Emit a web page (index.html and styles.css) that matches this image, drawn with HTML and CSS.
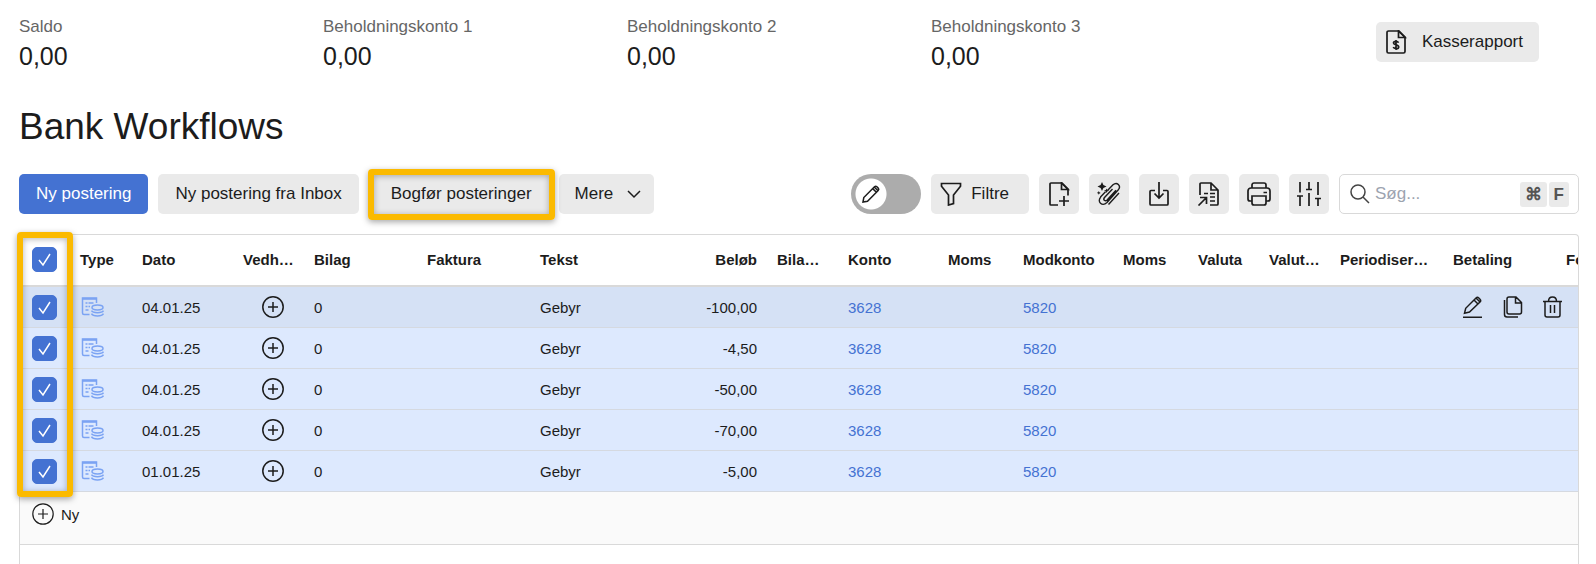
FILE: index.html
```
<!DOCTYPE html>
<html lang="da">
<head>
  <meta charset="UTF-8">
  <meta name="viewport" content="width=device-width, initial-scale=1.0">
  <title>Bank Workflows</title>
  <link rel="stylesheet" href="styles.css">
</head>
<body>
  <svg class="sprite" aria-hidden="true">
    <symbol id="i-plus-circle" viewBox="0 0 24 24">
      <circle cx="12" cy="12" r="10.2"/><path d="M12 7v10M7 12h10"/>
    </symbol>
    <symbol id="i-type" viewBox="0 0 24 24">
      <path d="M9.500 19.500H4A1.500 1.500 0 0 1 2.500 18V3h14v5"/><path d="M2.500 3.800h14" stroke-width="2"/>
      <path d="M5.500 8h2M8.500 8h5M5.500 11.500h2M8.500 11.500h1.500M5.500 15h3"/>
      <ellipse cx="17.500" cy="12.500" rx="5.500" ry="2.400"/>
      <path d="M11.500 15.700c1.500 2.600 10.500 2.600 12 0M11.500 18.700c1.500 3 10.500 3 12 0"/>
    </symbol>
    <symbol id="i-edit" viewBox="0 0 24 24">
      <path d="M3 22.300h19M4.500 18.300l1.200-5L16 3a2 2 0 0 1 2.800 0l1.200 1.200a2 2 0 0 1 0 2.800L9.500 17.100zM14 5l4 4M16 3l4 4"/>
    </symbol>
    <symbol id="i-copy" viewBox="0 0 24 24">
      <path d="M9 2h7l5.500 5.500V17a2 2 0 0 1-2 2H9a2 2 0 0 1-2-2V4a2 2 0 0 1 2-2zM15.500 2v6h6M4.500 5v14.500A2.500 2.500 0 0 0 7 22h11"/>
    </symbol>
    <symbol id="i-trash" viewBox="0 0 24 24">
      <path d="M3 6.500h19M5 6.500v13.500a2 2 0 0 0 2 2h11a2 2 0 0 0 2-2V6.500M8.500 6.500c0-6 8-6 8 0M10.500 10v8M14.500 10v8"/>
    </symbol>
  </svg>

  <header class="stats">
    <div class="stat"><span>Saldo</span><strong>0,00</strong></div>
    <div class="stat"><span>Beholdningskonto 1</span><strong>0,00</strong></div>
    <div class="stat"><span>Beholdningskonto 2</span><strong>0,00</strong></div>
    <div class="stat"><span>Beholdningskonto 3</span><strong>0,00</strong></div>
    <button class="btn report">
      <svg class="icon" viewBox="0 0 24 24">
        <path d="M4.500 1H15l6 6v14.500a1.500 1.500 0 0 1-1.500 1.500h-15A1.500 1.500 0 0 1 3 21.500v-19A1.500 1.500 0 0 1 4.500 1z"/>
        <path d="M14.500 1v6.500H21z"/>
        <path d="M14.500 12.700c-.6-1.700-5-1.900-5 .3 0 2.400 5.200 1.400 5.200 3.900 0 2.300-4.800 2.200-5.400.2M12 10v10"/>
      </svg>
      Kasserapport
    </button>
  </header>

  <h1>Bank Workflows</h1>

  <div class="toolbar">
    <button class="btn primary">Ny postering</button>
    <button class="btn">Ny postering fra Inbox</button>
    <span class="marked"><button class="btn">Bogfør posteringer</button></span>
    <button class="btn more">Mere
      <svg width="16" height="16" viewBox="0 0 16 16"><path d="M2 5l6 6 6-6"/></svg>
    </button>

    <label class="switch">
      <input type="checkbox" aria-label="Redigering">
      <svg width="20" height="20" viewBox="0 0 20 20"><path d="M2 18l.8-4.500L13.500 2.800a1.700 1.700 0 0 1 2.400 0l1.300 1.300a1.700 1.700 0 0 1 0 2.400L6.500 17.200zM11.700 4.600l3.700 3.700M13.300 3l3.700 3.700"/></svg>
    </label>
    <button class="btn filter">
      <svg class="icon" viewBox="0 0 24 24"><path d="M2.500 1.500h19v2.800L14.500 13v8.500l-5 1.500V13l-7-8.700z"/></svg>
      Filtre
    </button>
    <button class="btn square" aria-label="Nyt bilag">
      <svg class="icon" viewBox="0 0 24 24"><path d="M11 23H4a1 1 0 0 1-1-1V2a1 1 0 0 1 1-1h11l6 6v6.500M17 14v10M12 19h10"/><path d="M14.500 1v6.500H21z"/></svg>
    </button>
    <button class="btn square" aria-label="Match bilag">
      <svg class="icon" viewBox="0 0 24 24">
        <path d="M10.500 8.500l5.500-5.700c4-3.500 8.500 1 5.300 4.900L10 20.500c-4.800 4.500-10.500-.8-6.200-5.500M15.500 7l-8 8.500c-1.800 2.300.6 4.400 2.600 2.500L19 8.200M17 11.500l-7 7.500M3.500 15l5-5.300M22 11L11.500 22.500" stroke-width="1.400"/>
        <path d="M5 0l1.400 3.100L9.500 4.500 6.400 5.900 5 9 3.600 5.900.5 4.500l3.100-1.400z" fill="currentColor" stroke="none"/>
        <path d="M9.500 6.500l.7 1.600 1.800.7-1.800.7-.7 1.500-.7-1.500-1.800-.7 1.800-.7zM1.800 9l.6 1.300 1.400.6-1.400.6-.6 1.300-.6-1.300-1.400-.6 1.400-.6z" fill="currentColor" stroke="none"/>
      </svg>
    </button>
    <button class="btn square" aria-label="Importer">
      <svg class="icon" viewBox="0 0 24 24"><path d="M8 8.500H4a1 1 0 0 0-1 1V22a1 1 0 0 0 1 1h16a1 1 0 0 0 1-1V9.500a1 1 0 0 0-1-1h-4M12 0v16M7.500 11.500L12 16l4.500-4.500"/></svg>
    </button>
    <button class="btn square" aria-label="Eksporter">
      <svg class="icon" viewBox="0 0 24 24"><path d="M3 13V2a1 1 0 0 1 1-1h10l7 7v14a1 1 0 0 1-1 1h-7M14 1v7h7M7 11.500h4M13 11.500h5M13 15h5M13 19h5M1.500 23.500l8-8M3 15.500h6.500V22"/></svg>
    </button>
    <button class="btn square" aria-label="Udskriv">
      <svg class="icon" viewBox="0 0 24 24"><path d="M5 19H3a2 2 0 0 1-2-2V9a3 3 0 0 1 3-3h16a3 3 0 0 1 3 3v8a2 2 0 0 1-2 2h-2M5 6V3a2 2 0 0 1 2-2h10a2 2 0 0 1 2 2v3M5 14h14v7a2 2 0 0 1-2 2H7a2 2 0 0 1-2-2zM16.500 10.500H20"/></svg>
    </button>
    <button class="btn square" aria-label="Indstillinger">
      <svg class="icon" viewBox="0 0 24 24"><path d="M3 0v10.500M0 14h6M3 14v10M12 0v7.500M9 7.500h6M12 11v13M21 0v13M18 16.500h6M21 16.500V24"/></svg>
    </button>
    <div class="search">
      <svg width="20" height="20" viewBox="0 0 20 20"><circle cx="8" cy="8" r="7"/><path d="M13 13l6 6"/></svg>
      <input type="text" placeholder="Søg..." aria-label="Søg">
      <kbd>⌘</kbd><kbd>F</kbd>
    </div>
  </div>

  <main class="grid-wrap">
    <div class="grid">
      <table>
        <colgroup>
          <col class="c-check"><col class="c-type"><col class="c-date"><col class="c-short"><col class="c-wide"><col class="c-wide">
          <col class="c-text"><col class="c-amount"><col class="c-short"><col class="c-konto"><col class="c-moms"><col class="c-konto">
          <col class="c-moms"><col class="c-short"><col class="c-short"><col class="c-wide"><col class="c-wide"><col class="c-wide">
        </colgroup>
        <thead>
          <tr>
            <th class="check"><input type="checkbox" aria-label="Vælg alle" checked></th>
            <th>Type</th><th>Dato</th><th title="Vedhæftning">Vedh…</th><th>Bilag</th><th>Faktura</th><th>Tekst</th>
            <th class="num">Beløb</th><th title="Bilagsnr.">Bila…</th><th>Konto</th><th>Moms</th><th>Modkonto</th><th>Moms</th>
            <th>Valuta</th><th title="Valutakurs">Valut…</th><th title="Periodisering">Periodiser…</th><th>Betaling</th><th>Forfald</th>
          </tr>
        </thead>
        <tbody id="rows"></tbody>
      </table>
      <div class="new-row">
        <button><svg class="icon" viewBox="0 0 24 24"><use href="#i-plus-circle"/></svg>Ny</button>
      </div>
    </div>
    <div class="check-mark-area"></div>
  </main>

  <script>
    const entries = [
      { date: '04.01.25', text: 'Gebyr', amount: '-100,00', konto: 3628, modkonto: 5820 },
      { date: '04.01.25', text: 'Gebyr', amount: '-4,50', konto: 3628, modkonto: 5820 },
      { date: '04.01.25', text: 'Gebyr', amount: '-50,00', konto: 3628, modkonto: 5820 },
      { date: '04.01.25', text: 'Gebyr', amount: '-70,00', konto: 3628, modkonto: 5820 },
      { date: '01.01.25', text: 'Gebyr', amount: '-5,00', konto: 3628, modkonto: 5820 }
    ];

    const icon = (name) => `<svg class="icon" viewBox="0 0 24 24"><use href="#i-${name}"/></svg>`;

    const actions = `
      <div class="actions">
        <button aria-label="Rediger">${icon('edit')}</button>
        <button aria-label="Kopier">${icon('copy')}</button>
        <button aria-label="Slet">${icon('trash')}</button>
      </div>`;

    document.getElementById('rows').innerHTML = entries.map((e, i) => `
      <tr class="${i === 0 ? 'active' : ''}">
        <td class="check"><input type="checkbox" aria-label="Vælg postering ${i + 1}" checked></td>
        <td class="type">${icon('type')}</td>
        <td>${e.date}</td>
        <td class="attach"><button aria-label="Vedhæft">${icon('plus-circle')}</button></td>
        <td>0</td>
        <td></td>
        <td>${e.text}</td>
        <td class="num">${e.amount}</td>
        <td></td>
        <td><a href="#">${e.konto}</a></td>
        <td></td>
        <td><a href="#">${e.modkonto}</a></td>
        <td></td><td></td><td></td><td></td>
        <td colspan="2">${i === 0 ? actions : ''}</td>
      </tr>`).join('');
  </script>
</body>
</html>
```
FILE: styles.css
```
* {
  box-sizing: border-box;
}
body {
  margin: 0;
  min-height: 100vh;
  display: flex;
  flex-direction: column;
  padding: 17px 17px 0 19px;
  font-family: "Liberation Sans", Arial, sans-serif;
  font-size: 17px;
  color: #1c1c1c;
  background: #fff;
  overflow: hidden;
}
button, input, kbd {
  font: inherit;
  color: inherit;
}
button {
  border: none;
  padding: 0;
  background: none;
  cursor: pointer;
}
svg {
  fill: none;
  stroke: currentColor;
  stroke-width: 1.5;
  flex: none;
  display: block;
}
.sprite {
  position: absolute;
  width: 0;
  height: 0;
}
.icon {
  width: 24px;
  height: 24px;
}

/* balances */
.stats {
  display: flex;
  align-items: flex-start;
  padding-right: 40px;
}
.stat {
  width: 304px;
}
.stat span {
  display: block;
  line-height: 20px;
  margin-bottom: 4px;
  color: #666;
}
.stat strong {
  display: block;
  font-size: 25px;
  font-weight: normal;
  line-height: 30px;
}
h1 {
  margin: 34px 0 25px;
  font-size: 37px;
  font-weight: normal;
  line-height: 44px;
}

/* toolbar */
.toolbar {
  display: flex;
  align-items: center;
  gap: 10px;
}
.btn {
  display: flex;
  align-items: center;
  height: 40px;
  padding: 0 17px;
  border-radius: 5px;
  background: #eaeaea;
  white-space: nowrap;
}
.btn.report {
  margin: 5px 0 0 auto;
  padding: 0 16px 0 8px;
  gap: 14px;
}
.btn.primary {
  background: #4472d2;
  color: #fff;
}
.btn.more {
  padding: 0 12px 0 16px;
  gap: 13px;
}
.btn.filter {
  padding: 0 20px 0 8px;
  gap: 8px;
}
.btn.square {
  width: 40px;
  padding: 0;
  justify-content: center;
}
.btn .icon {
  stroke-width: 1.7;
}
.marked {
  position: relative;
  margin-left: 5px;
}
.marked .btn {
  border-radius: 0;
}
.marked::after,
.check-mark-area {
  content: "";
  position: absolute;
  border: 6px solid #fbba00;
  border-radius: 4px;
  box-shadow: 0 2px 6px rgba(0,0,0,0.35), inset 0 1px 6px rgba(0,0,0,0.3);
  pointer-events: none;
}
.marked::after {
  inset: -5px -6px -6px;
}
.switch {
  position: relative;
  margin-left: auto;
  height: 40px;
}
.switch input {
  appearance: none;
  margin: 0;
  width: 70px;
  height: 40px;
  border-radius: 20px;
  background: radial-gradient(circle at 20px 20px, #fff 15px, #acacac 16px);
}
.switch svg {
  position: absolute;
  left: 10px;
  top: 10px;
}
.search {
  display: flex;
  align-items: center;
  width: 240px;
  height: 40px;
  padding: 0 9px 0 10px;
  border: 1px solid #d9d9d9;
  border-radius: 5px;
}
.search svg {
  color: #444;
}
.search input {
  flex: 1;
  min-width: 0;
  margin: 0 5px;
  padding: 0;
  border: none;
  outline: none;
  background: none;
}
.search input::placeholder {
  color: #9ca3af;
}
.search kbd {
  height: 25px;
  padding: 0 5px;
  line-height: 25px;
  border-radius: 3px;
  background: #eaeaea;
  color: #555;
  font-weight: bold;
}
.search kbd + kbd {
  margin-left: 2px;
}

/* table */
.grid-wrap {
  position: relative;
  flex: 1;
  display: flex;
  margin-top: 20px;
}
.grid {
  flex: 1;
  min-width: 0;
  overflow: hidden;
  border: 1px solid #d9d9d9;
  border-bottom: none;
  border-radius: 4px 4px 0 0;
}
.check-mark-area {
  top: -2px;
  left: -2px;
  width: 56px;
  height: 265px;
}
table {
  width: 1649px;
  table-layout: fixed;
  border-collapse: separate;
  border-spacing: 0;
  font-size: 15px;
}
.c-check { width: 50px; }
.c-type { width: 62px; }
.c-date { width: 101px; }
.c-short { width: 71px; }
.c-wide { width: 113px; }
.c-text { width: 125px; }
.c-amount { width: 112px; }
.c-konto { width: 100px; }
.c-moms { width: 75px; }
th, td {
  padding: 0 10px;
  text-align: left;
  white-space: nowrap;
}
th {
  height: 52px;
  padding-bottom: 2px;
  border-bottom: 2px solid #d9d9d9;
}
td {
  height: 41px;
  border-bottom: 1px solid #d5d9e0;
  background: #dde9fe;
}
.active td {
  background: #d5e1f5;
}
.num {
  text-align: right;
}
.check {
  padding-left: 12px;
  padding-right: 0;
}
.check input {
  appearance: none;
  display: block;
  width: 25px;
  height: 25px;
  margin: 0;
  border: 1px solid #4472d2;
  border-radius: 5px;
}
.check input:checked {
  background: #4472d2 url("data:image/svg+xml,%3Csvg xmlns='http://www.w3.org/2000/svg' viewBox='0 0 23 23'%3E%3Cpath d='M6 12l4 5 7-11' fill='none' stroke='white' stroke-width='1.500'/%3E%3C/svg%3E");
}
.type {
  color: #7ba3f3;
}
.attach {
  padding: 0;
}
.attach button {
  display: block;
  margin-left: 28px;
}
td a {
  color: #4472d2;
  text-decoration: none;
}
.actions {
  display: flex;
  gap: 16px;
  padding-left: 7px;
}
.new-row {
  height: 53px;
  padding-top: 10px;
  padding-left: 11px;
  border-bottom: 1px solid #d9d9d9;
  background: #fafafa;
  font-size: 15px;
}
.new-row button {
  display: flex;
  align-items: center;
  gap: 6px;
}
.new-row .icon {
  stroke-width: 1.2;
}
```
